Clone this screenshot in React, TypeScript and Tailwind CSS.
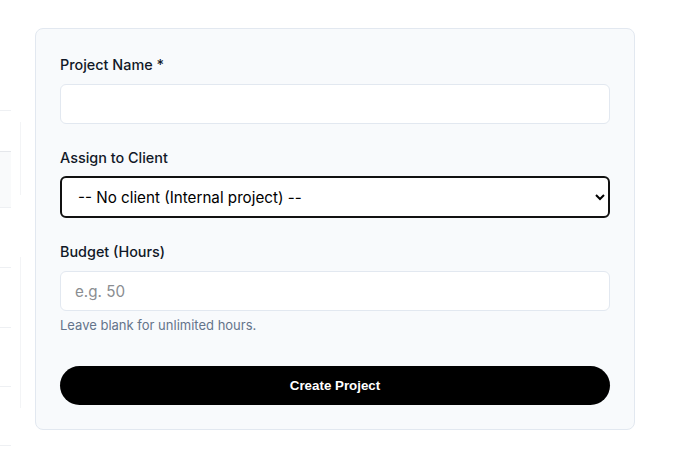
import React from "react";

const rowLines = [41, 56, 60, 60, 59, 59];

function TableEdge() {
  return (
    <div className="flex w-[21px] shrink-0">
      <div className="w-[11px] pt-[110px]">
        {rowLines.map((h, i) => (
          <div
            key={i}
            style={{ height: h }}
            className={
              i === 1
                ? "border-t border-[#e5e7eb] bg-[#f9fafb]"
                : "border-t border-[#eef0f3]"
            }
          />
        ))}
        <div className="border-t border-[#eef0f3]" />
      </div>
      <div className="ml-[9px] w-px pt-[122px]">
        <div className="h-[73px] bg-[#f3f4f6]" />
        <div className="h-[62px]" />
        <div className="h-[151px] bg-[#f3f4f6]" />
      </div>
    </div>
  );
}

export default function App() {
  return (
    <div
      className="flex h-[457px] w-[675px] overflow-hidden bg-white text-[#111827]"
      style={{ fontFamily: "Inter, 'Noto Sans', sans-serif" }}
    >
      <TableEdge />
      <div className="ml-[14px] pt-[28px]">
        <form className="w-[600px] rounded-lg border border-[#e2e8f0] bg-[#f8fafc] px-6 pb-6 pt-[26px]">
          <div className="space-y-6">
            <div>
              <label
                htmlFor="project-name"
                className="mb-[9px] block text-[14.4px] font-medium leading-5 text-[#111827]"
              >
                Project Name *
              </label>
              <input
                id="project-name"
                type="text"
                className="block h-[40px] w-full rounded-md border border-[#e2e8f0] bg-white px-[14px] text-[15.2px] outline-none"
              />
            </div>

            <div>
              <label
                htmlFor="client"
                className="mb-2 block text-[14.4px] font-medium leading-5 text-[#111827]"
              >
                Assign to Client
              </label>
              <select
                id="client"
                defaultValue=""
                className="block h-[42px] w-full rounded-md border-2 border-[#111111] bg-white px-3 text-[15.2px] text-black outline-none"
              >
                <option value="">-- No client (Internal project) --</option>
              </select>
            </div>

            <div>
              <label
                htmlFor="budget"
                className="mb-[9px] block text-[14.4px] font-medium leading-5 text-[#111827]"
              >
                Budget (Hours)
              </label>
              <input
                id="budget"
                type="number"
                placeholder="e.g. 50"
                className="block h-[40px] w-full rounded-md border border-[#e2e8f0] bg-white px-[14px] text-[15.2px] outline-none placeholder:text-[#8a8d91]"
              />
              <p className="mt-[6px] text-[13px] leading-4 text-[#64748b]">
                Leave blank for unlimited hours.
              </p>
            </div>

            <button
              type="button"
              className="mt-[33px] block h-[39px] w-full rounded-full bg-black text-[13.333px] font-bold text-white"
              style={{ fontFamily: "'Liberation Sans', Arial, sans-serif" }}
            >
              Create Project
            </button>
          </div>
        </form>
      </div>
    </div>
  );
}
